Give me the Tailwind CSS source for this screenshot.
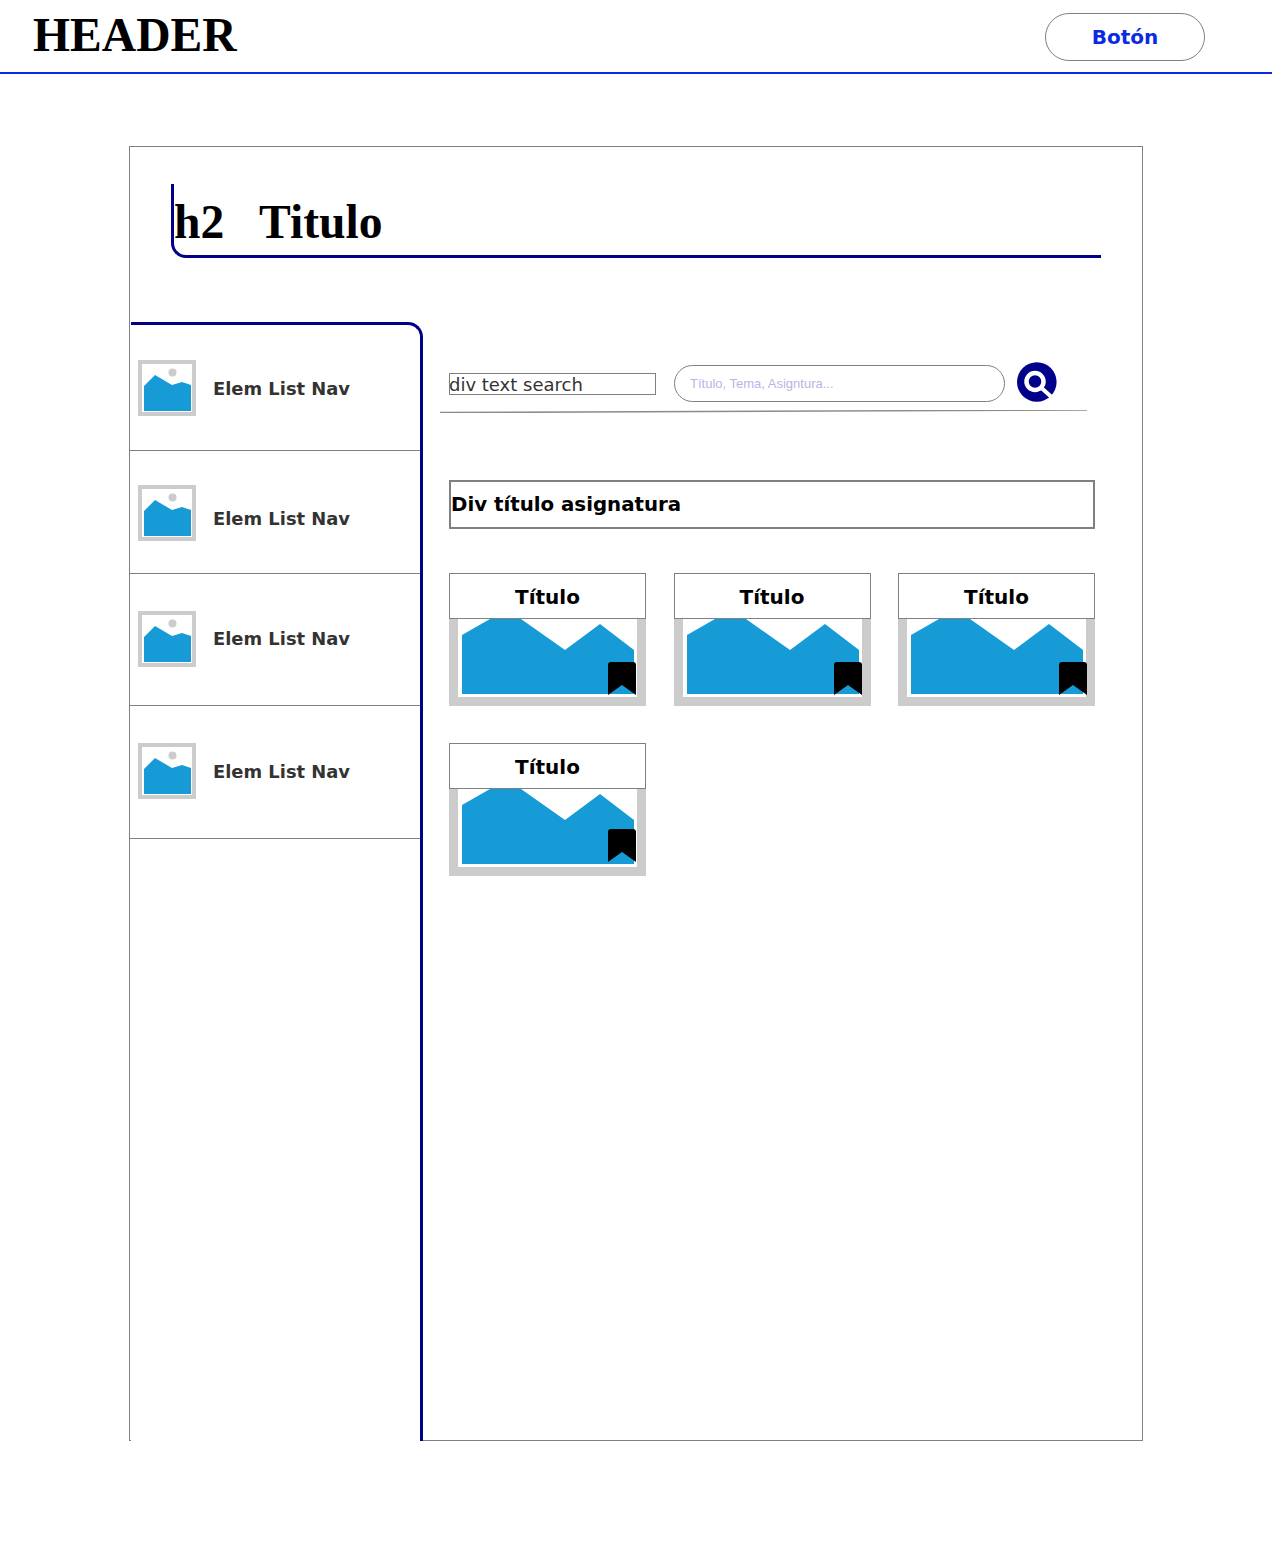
<!DOCTYPE html>
<html lang="en">
<head>
  <meta charset="UTF-8">
  <meta name="viewport" content="width=device-width, initial-scale=1.0">
  <title>Wireframe</title>
  <script src="https://cdn.jsdelivr.net/npm/@tailwindcss/browser@4"></script>
</head>
<body class="bg-white font-['DejaVu_Sans',sans-serif]">
  <svg class="hidden">
    <symbol id="thumb" viewBox="0 0 58 56">
      <rect width="58" height="56" fill="#cccccc"/>
      <rect x="4" y="4" width="50" height="48" fill="#ffffff"/>
      <circle cx="34.5" cy="12.5" r="4" fill="#cccccc"/>
      <polygon points="6,26 17,15 34,25 44,22 53,25 53,51 6,51" fill="#179bd7"/>
    </symbol>
    <symbol id="pic" viewBox="0 0 197 87">
      <rect width="197" height="87" fill="#cccccc"/>
      <rect x="9" width="179" height="78" fill="#ffffff"/>
      <polygon points="13,16 41,0 72,0 116,31 151,5 185,31 185,75 13,75" fill="#179bd7"/>
    </symbol>
    <symbol id="mark" viewBox="0 0 28 33">
      <path d="M0 33V3Q0 0 3 0H25Q28 0 28 3V33L14 23Z" fill="#000000"/>
    </symbol>
  </svg>

  <header class="h-[74px] border-b-2 border-[#0a2be0] flex items-center justify-between pl-[33px] pr-[67px]">
    <h1 class="font-['Liberation_Serif',serif] font-bold text-[47.6px] leading-none text-black">HEADER</h1>
    <button class="mt-[2px] w-[160px] h-[48px] rounded-full border border-[#808080] text-[20px] font-bold text-[#0a2be0]">Botón</button>
  </header>

  <main class="mt-[72px] ml-[129px] w-[1014px] h-[1295px] border border-[#808080]">
    <div class="pt-[37px] pl-[41px]">
      <h2 class="w-[930px] h-[74px] border-l-[3px] border-b-[3px] border-[#00008b] rounded-bl-[15px] flex items-end pb-[8px] font-['Liberation_Serif',serif] font-bold text-[47.6px] leading-none text-black whitespace-pre">h2   Titulo</h2>
    </div>

    <div class="flex mt-[64px]">
      <nav class="relative ml-px w-[292px] h-[1119px] bg-white border-t-[3px] border-r-[3px] border-[#00008b] rounded-tr-[15px] text-[#333333] text-[17.9px] font-bold">
        <div class="-ml-px h-[126px] border-b border-[#808080] pt-[35px] pl-[8px] flex items-start gap-[17px]">
          <svg class="w-[58px] h-[56px]"><use href="#thumb"/></svg>
          <span class="mt-[16px]">Elem List Nav</span>
        </div>
        <div class="-ml-px h-[123px] border-b border-[#808080] pt-[34px] pl-[8px] flex items-start gap-[17px]">
          <svg class="w-[58px] h-[56px]"><use href="#thumb"/></svg>
          <span class="mt-[21px]">Elem List Nav</span>
        </div>
        <div class="-ml-px h-[132px] border-b border-[#808080] pt-[37px] pl-[8px] flex items-start gap-[17px]">
          <svg class="w-[58px] h-[56px]"><use href="#thumb"/></svg>
          <span class="mt-[15px]">Elem List Nav</span>
        </div>
        <div class="-ml-px h-[133px] border-b border-[#808080] pt-[37px] pl-[8px] flex items-start gap-[17px]">
          <svg class="w-[58px] h-[56px]"><use href="#thumb"/></svg>
          <span class="mt-[16px]">Elem List Nav</span>
        </div>
      </nav>

      <section class="flex-1 pt-[40px]">
        <div class="flex items-start pl-[26px]">
          <div class="w-[207px] h-[22px] mt-[11px] border border-[#808080] text-[18px] leading-[22px] indent-[-1px] text-[#333333]">div text search</div>
          <input type="text" placeholder="Título, Tema, Asigntura..." class="ml-[18px] mt-[3px] w-[331px] h-[37px] rounded-full border border-[#808080] pl-[15px] font-['Liberation_Sans',sans-serif] text-[13px] placeholder:text-[#b9b6e2]">
          <svg class="ml-[12px] w-[40px] h-[40px]" viewBox="0 0 40 40">
            <circle cx="19.8" cy="20" r="19.8" fill="#00008b"/>
            <circle cx="18" cy="19.5" r="8.5" fill="none" stroke="#ffffff" stroke-width="4.5"/>
            <line x1="24.5" y1="26" x2="34.5" y2="35" stroke="#ffffff" stroke-width="4"/>
          </svg>
        </div>
        <svg class="block ml-[17px] mt-[8px] w-[647px] h-[3px]" viewBox="0 0 647 3">
          <line x1="0" y1="2.6" x2="647" y2="0" stroke="#8c8c8c" stroke-width="1.5"/>
        </svg>

        <div class="ml-[26px] mt-[67px] w-[646px] h-[49px] border-2 border-[#808080] flex items-center text-[19.8px] font-bold text-black">Div título asignatura</div>

        <div class="ml-[26px] mt-[44px] w-[646px] grid grid-cols-[197px_197px_197px] gap-x-[27.5px] gap-y-[37px]">
          <article class="relative">
            <div class="h-[46px] bg-white border border-[#808080] flex items-center justify-center pt-px text-[20px] font-bold text-black">Título</div>
            <svg class="block w-[197px] h-[87px]"><use href="#pic"/></svg>
            <svg class="absolute left-[159px] top-[89px] w-[28px] h-[33px]"><use href="#mark"/></svg>
          </article>
          <article class="relative">
            <div class="h-[46px] bg-white border border-[#808080] flex items-center justify-center pt-px text-[20px] font-bold text-black">Título</div>
            <svg class="block w-[197px] h-[87px]"><use href="#pic"/></svg>
            <svg class="absolute left-[160px] top-[89px] w-[28px] h-[33px]"><use href="#mark"/></svg>
          </article>
          <article class="relative">
            <div class="h-[46px] bg-white border border-[#808080] flex items-center justify-center pt-px text-[20px] font-bold text-black">Título</div>
            <svg class="block w-[197px] h-[87px]"><use href="#pic"/></svg>
            <svg class="absolute left-[161px] top-[89px] w-[28px] h-[33px]"><use href="#mark"/></svg>
          </article>
          <article class="relative">
            <div class="h-[46px] bg-white border border-[#808080] flex items-center justify-center pt-px text-[20px] font-bold text-black">Título</div>
            <svg class="block w-[197px] h-[87px]"><use href="#pic"/></svg>
            <svg class="absolute left-[159px] top-[86px] w-[28px] h-[33px]"><use href="#mark"/></svg>
          </article>
        </div>
      </section>
    </div>
  </main>
</body>
</html>
